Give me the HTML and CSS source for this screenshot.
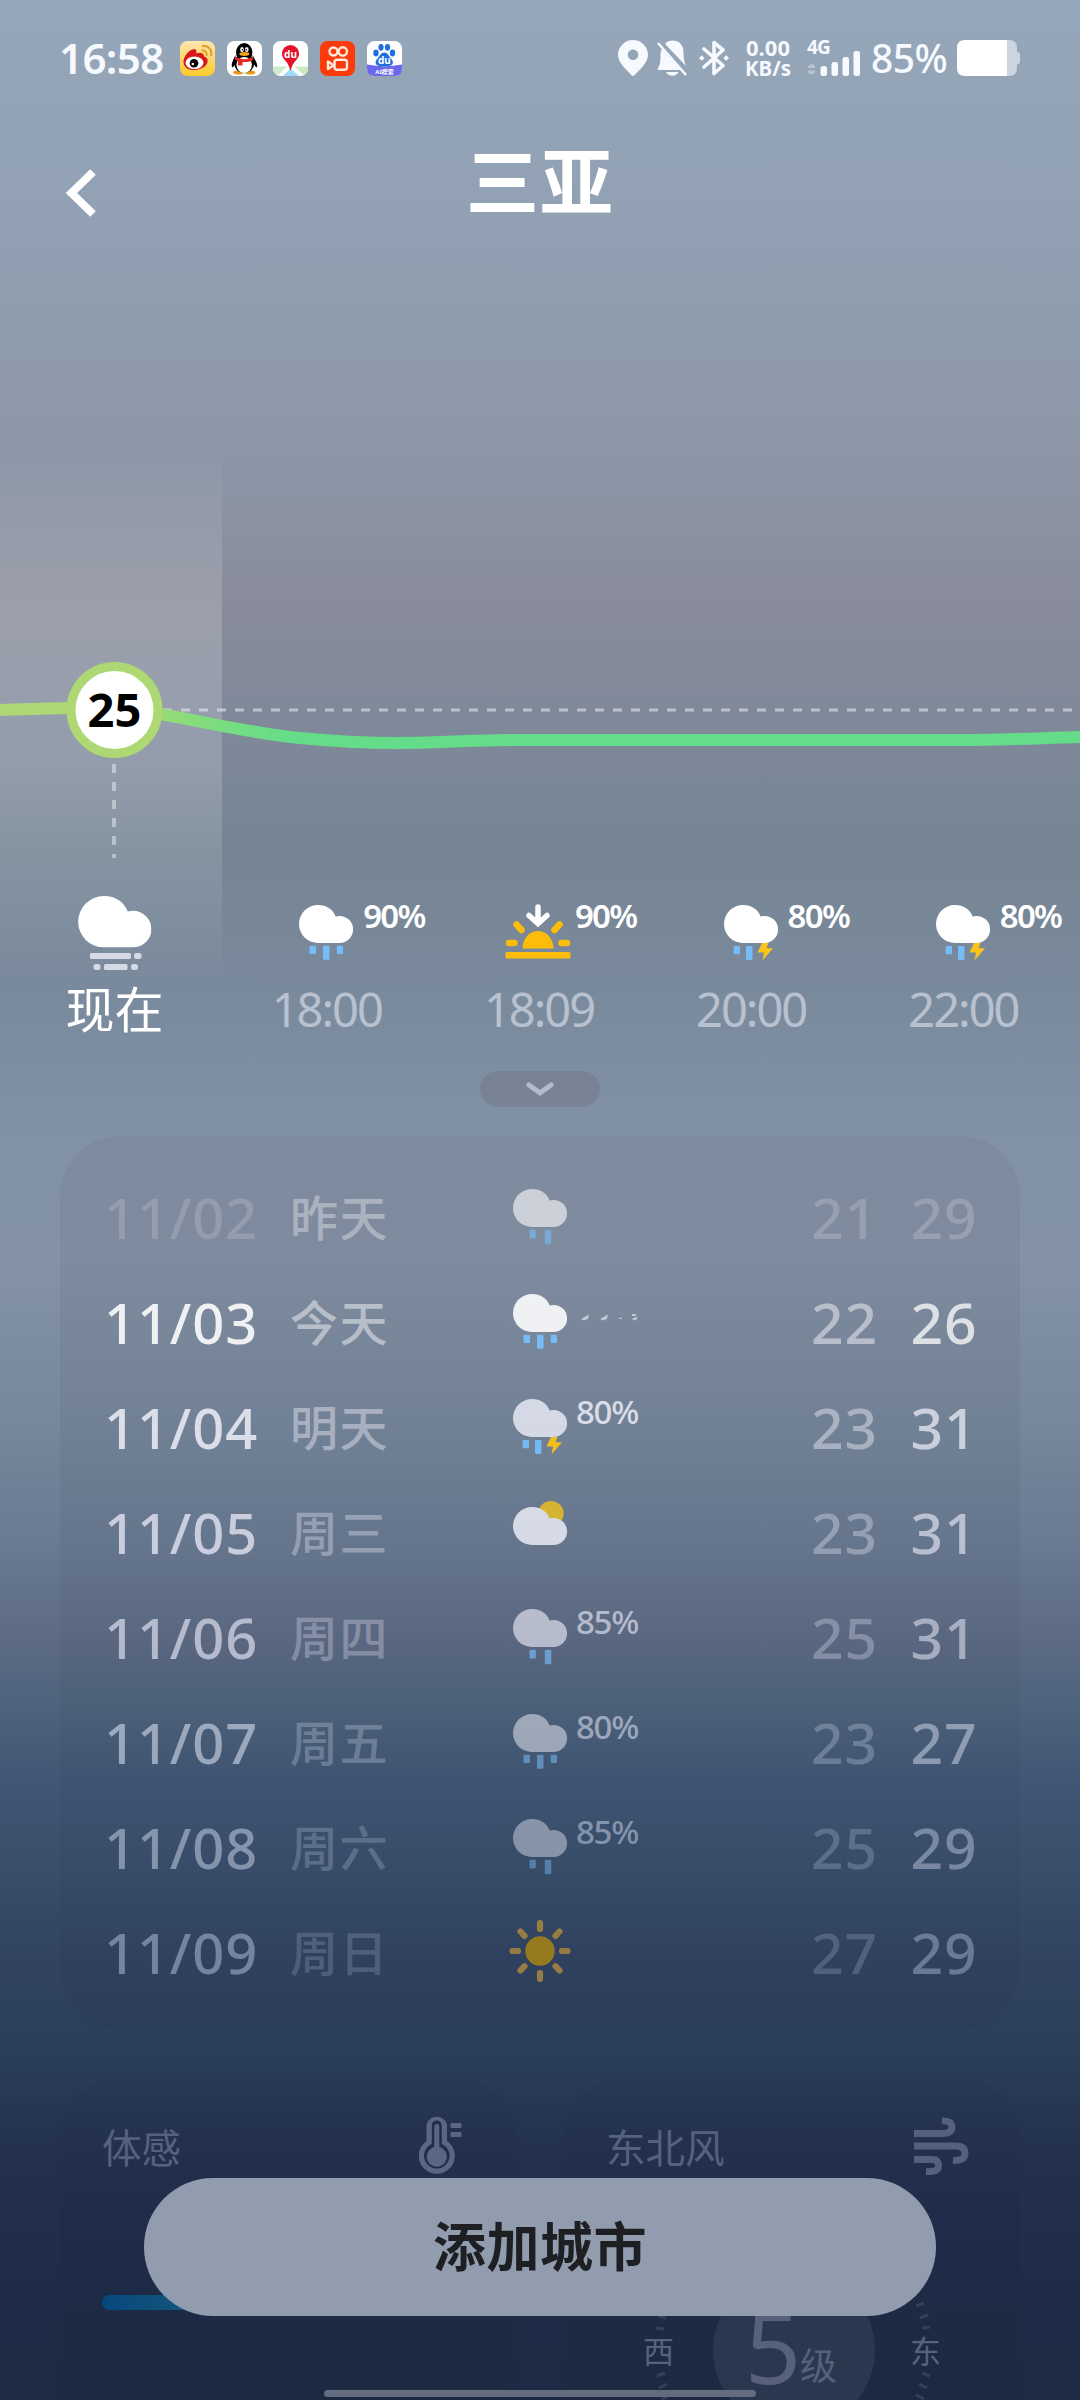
FILE: index.html
```html
<!DOCTYPE html>
<html lang="zh-CN">
<head>
<meta charset="utf-8">
<title>三亚</title>
<link rel="stylesheet" href="styles.css">
</head>
<body>
<svg class="defs" width="0" height="0" aria-hidden="true">
  <symbol id="cloud" viewBox="0 0 54 38"><path d="M19 0C27.500 0 34.200 4.600 36.600 11.500C37.800 11.100 39.200 10.900 40.500 10.900A13.500 13.500 0 0 1 40.500 38H19A19 19 0 0 1 19 0Z" fill="currentColor"/></symbol>
  <symbol id="rain3" viewBox="0 0 54 58"><use href="#cloud" width="54" height="38"/><g fill="#76bdf8"><rect x="10.500" y="40.700" width="6.500" height="8.300" rx="1"/><rect x="24" y="40.700" width="6.500" height="14" rx="1"/><rect x="37.800" y="40.700" width="6.200" height="8.300" rx="1"/></g></symbol>
  <symbol id="rain2" viewBox="0 0 54 58"><use href="#cloud" width="54" height="38"/><g fill="#76bdf8"><rect x="16.500" y="40.700" width="6.300" height="8.800" rx="1"/><rect x="31.800" y="40.700" width="6.500" height="14.500" rx="1"/></g></symbol>
  <symbol id="thunder" viewBox="0 0 54 58" overflow="visible"><use href="#cloud" width="54" height="38"/><g fill="#76bdf8"><rect x="9.700" y="41" width="6.300" height="8.300" rx="1"/><rect x="22" y="41" width="6.500" height="14" rx="1"/></g><path d="M38 38H44.500L42.500 43.300H49L38.500 55.500L40 47.500H33.500Z" fill="#fcc419"/></symbol>
  <symbol id="partly" viewBox="0 0 54 58" overflow="visible"><circle cx="38" cy="9.500" r="12.600" fill="#f5c518"/><use href="#cloud" y="3" width="54" height="38"/></symbol>
  <symbol id="sun" viewBox="0 0 62 62"><circle cx="31" cy="31" r="14.700" fill="#a88414"/><path d="M31 3V9M31 53V59M3.500 31H9M53 31H58.500M11.500 11.500L15.500 15.800M50.500 11.500L46.500 15.800M11.500 50.500L15.500 46.200M50.500 50.500L46.500 46.200" stroke="#a9873f" stroke-width="6.200" stroke-linecap="round"/></symbol>
</svg>

<header class="status">
  <span class="clock">16:58</span>
  <div class="apps">
    <svg viewBox="0 0 35 35"><defs><linearGradient id="wb" x2="0" y2="1"><stop stop-color="#fde6b0"/><stop offset="1" stop-color="#fcc92c"/></linearGradient></defs><rect width="35" height="35" rx="7.500" fill="url(#wb)"/><path d="M3.500 20C4 14 11 7 15 8.300C17 9 16.600 11 16 12.600C19 11 24 11 24 15.500C28.500 16.500 29 21.500 25 25.300C20 29.800 10 30.300 6 26.400C4 24.500 3.300 22.500 3.500 20Z" fill="#d8161b"/><ellipse cx="14.500" cy="21.800" rx="9" ry="6.300" fill="#fff"/><circle cx="14" cy="22.300" r="4.300"/><circle cx="12.800" cy="23" r="1.300" fill="#fff"/><path d="M21.500 9.500C25 8.800 27.500 11.500 26.500 14.800M22 5C28.500 4 32.500 9 31 15" fill="none" stroke="#e0a12c" stroke-width="2.200"/></svg>
    <svg viewBox="0 0 35 35"><rect width="35" height="35" rx="7.500" fill="#fff"/><ellipse cx="11.500" cy="31.500" rx="5.500" ry="2" fill="#e79b18"/><ellipse cx="23" cy="31.500" rx="5.500" ry="2" fill="#e79b18"/><path d="M8.500 14C6 19 4 23 5 26C6 27 7.500 24 8.500 22ZM25.500 14C28 19 31 23 30 26C29 27 27.500 24 26 22Z"/><ellipse cx="17.200" cy="22.500" rx="10" ry="9.600"/><ellipse cx="17.200" cy="11.500" rx="8.200" ry="9.500"/><ellipse cx="17.200" cy="24" rx="7.700" ry="8" fill="#fff"/><ellipse cx="15" cy="8.500" rx="1.800" ry="2.600" fill="#fff"/><ellipse cx="19.800" cy="8.500" rx="1.800" ry="2.600" fill="#fff"/><circle cx="15.500" cy="8.700" r=".8"/><circle cx="19.400" cy="8.700" r=".8"/><ellipse cx="17.400" cy="13" rx="5" ry="1.900" fill="#f5a11c"/><path d="M8.500 15.500C14 19 21 19 26 15.500V19C23 21 19 21.300 15.500 21V24.500H11V20C9.500 19.500 8.500 19 8 18.500Z" fill="#e32b26"/></svg>
    <svg viewBox="0 0 35 35"><rect width="35" height="35" rx="7.500" fill="#fff"/><path d="M0 25.500H14L6 33.500Q0 33 0 27.500Z" fill="#cceccf"/><path d="M21 25.500H35V27.500Q35 32 31 34Z" fill="#cfe9c2"/><path d="M10 35L17.500 27.500L26 35Z" fill="#9bddf6"/><path d="M17.500 4A8.600 8.600 0 0 1 26.100 12.600C26.100 19 19.500 20 18 29H17C15.500 20 8.900 19 8.900 12.600A8.600 8.600 0 0 1 17.500 4Z" fill="#e2142d"/><text x="17.500" y="16.500" text-anchor="middle" class="du">du</text></svg>
    <svg viewBox="0 0 35 35"><rect width="35" height="35" rx="7.500" fill="#fd3a0a"/><g fill="none" stroke="#ffe8dc" stroke-width="2.400"><circle cx="13.500" cy="10.500" r="4"/><circle cx="22.800" cy="10.500" r="4.200"/><rect x="14.500" y="18.800" width="12.500" height="10" rx="2.500"/><path d="M8 20.500V28L13.500 24.300Z" stroke-linejoin="round"/></g></svg>
    <svg viewBox="0 0 35 35"><rect width="35" height="35" rx="7.500" fill="#fff"/><path d="M0 23.500Q17.500 27 35 23.500V27.500Q35 35 27.500 35H7.500Q0 35 0 27.500Z" fill="#6a68ee"/><g fill="#1f6fe0"><ellipse cx="9" cy="12" rx="2.700" ry="3.400"/><ellipse cx="14" cy="6.300" rx="2.600" ry="3.400"/><ellipse cx="20.500" cy="6.300" rx="2.600" ry="3.400"/><ellipse cx="25.500" cy="12" rx="2.700" ry="3.400"/><path d="M17.300 11.500C21 11.500 21.500 15 24 17.500C28 22 25 25 21.500 25H13C9.500 25 6.500 22 10.500 17.500C13 15 13.600 11.500 17.300 11.500Z"/></g><text x="17.300" y="22.800" text-anchor="middle" class="du">du</text><text x="17.500" y="32.800" text-anchor="middle" class="ai">AI搜索</text></svg>
  </div>
  <div class="sys">
    <svg class="pin" viewBox="0 0 30 36"><path fill-rule="evenodd" d="M15 0A15 15 0 0 1 30 15C30 23 21 30 16.500 35.300Q15 36.500 13.500 35.300C9 30 0 23 0 15A15 15 0 0 1 15 0ZM15 9.500A5.300 5.300 0 1 0 15 20.100A5.300 5.300 0 1 0 15 9.500Z" fill="currentColor"/></svg>
    <svg class="bell" viewBox="0 0 31 36"><path d="M8.500 3C15-2 26.500.5 26.500 12C26.500 19 27.500 23 29.500 26.500L8.500 4.500ZM4.800 9L24 30H1.500Q0 29.500 1 28C3.500 24.500 3.500 20 3.500 14Q3.500 11 4.800 9ZM9 32H21.500C19.500 37 11.500 37 9 32Z" fill="currentColor"/><path d="M1 3L29 35" stroke="currentColor" stroke-width="2.600"/></svg>
    <svg class="bt" viewBox="0 0 30 36"><path d="M5 9L24 25.500L15 33.500V2.500L24 10L5 27" fill="none" stroke="currentColor" stroke-width="3.600" stroke-linejoin="round" stroke-linecap="round"/><path d="M2.800 15.300L5.500 18L2.800 20.700L0 18ZM27.200 15.300L30 18L27.200 20.700L24.500 18Z" fill="currentColor"/></svg>
    <div class="rate"><span>0.00</span><span>KB/s</span></div>
    <div class="signal"><span>4G</span>
      <svg viewBox="0 0 54 25"><path d="M.5 17A4.200 5.500 0 0 1 8.500 17ZM.5 19.500A4.200 5.500 0 0 0 8.500 19.500Z" fill="#fff" opacity=".35"/><g fill="currentColor"><rect x="13.500" y="15" width="6.500" height="10" rx="2.500"/><rect x="24.500" y="11" width="6.500" height="14" rx="2.500"/><rect x="35.500" y="6" width="6.500" height="19" rx="2.500"/><rect x="46.500" y="0" width="6.500" height="25" rx="2.500"/></g></svg>
    </div>
    <span class="level">85%</span>
    <svg class="battery" viewBox="0 0 63 36"><path d="M50 0H52Q60 0 60 8V12Q63 12 63 14V22Q63 24 60 24V28Q60 36 52 36H50Z" fill="#cbd4df"/><path d="M8 0H50V36H8Q0 36 0 28V8Q0 0 8 0Z" fill="#fff"/></svg>
  </div>
</header>

<div class="titlebar">
  <svg class="back" viewBox="0 0 30 48"><path d="M27 3L5.500 24L27 45" fill="none" stroke="#fff" stroke-width="8"/></svg>
  <h1>三亚</h1>
</div>

<section class="hourly">
  <div class="now-column"></div>
  <svg class="chart" viewBox="0 0 1080 440">
    <defs><linearGradient id="line" gradientUnits="userSpaceOnUse" x1="114" y1="0" x2="300" y2="0"><stop stop-color="#add873"/><stop offset=".25" stop-color="#97db78"/><stop offset=".65" stop-color="#74dd82"/><stop offset="1" stop-color="#64dc8a"/></linearGradient></defs>
    <path d="M163 270H1080" stroke="#fff" stroke-opacity=".48" stroke-width="3" stroke-dasharray="9 9"/>
    <path d="M114 324V418" stroke="#fff" stroke-opacity=".42" stroke-width="4" stroke-dasharray="9 9"/>
    <path d="M0 270C40 269 80 267 114 268C170 272 230 291 300 298C350 303 400 304 440 302C500 299 520 300 560 300H960C1010 300 1040 298 1080 297" fill="none" stroke="url(#line)" stroke-width="12"/>
    <circle cx="114.500" cy="270" r="43.500" fill="#fff" stroke="#add873" stroke-width="9"/>
    <text x="114.500" y="287" text-anchor="middle" class="now-temp">25</text>
  </svg>
  <div class="hours">
    <div class="hour now"><div class="hour-icon"><svg viewBox="0 0 74 76"><use href="#cloud" width="73.500" height="51.500"/><g fill="#d5dae5"><rect x="12" y="57" width="41" height="6" rx="1.500"/><rect x="56" y="57" width="7.500" height="6" rx="2.500"/><rect x="15.500" y="68" width="7" height="6" rx="2.500"/><rect x="26" y="68" width="23.500" height="6" rx="1.500"/><rect x="53" y="68" width="7" height="6" rx="2.500"/></g></svg></div><span>现在</span></div>
    <div class="hour"><div class="hour-icon"><svg viewBox="0 0 54 58"><use href="#rain3"/></svg><b>90%</b></div><span>18:00</span></div>
    <div class="hour sunset"><div class="hour-icon"><svg viewBox="0 0 66 58"><g stroke="#fbbd09" stroke-linecap="round" stroke-width="6.500"><path d="M4 39H9.500M56.500 39H62M11.500 20.500L16.500 26M54.500 20.500L49.500 26"/></g><path d="M17.500 44.500A15.500 17.500 0 0 1 48.500 44.500Z" fill="#fbbd09"/><rect x=".5" y="48" width="65" height="6.500" rx="1.500" fill="#fbbd09"/><path d="M33 3V18M24 11.500L33 19.500L42 11.500" fill="none" stroke="#fff" stroke-width="5.500" stroke-linecap="round"/></svg><b>90%</b></div><span>18:09</span></div>
    <div class="hour"><div class="hour-icon"><svg viewBox="0 0 54 58"><use href="#thunder"/></svg><b>80%</b></div><span>20:00</span></div>
    <div class="hour"><div class="hour-icon"><svg viewBox="0 0 54 58"><use href="#thunder"/></svg><b>80%</b></div><span>22:00</span></div>
  </div>
</section>

<button class="expand" aria-label="展开"><svg viewBox="0 0 28 15"><path d="M3 3L14 11L25 3" fill="none" stroke="#b1bbc9" stroke-width="5" stroke-linecap="round"/></svg></button>

<section class="daily">
  <div class="day d1"><span class="date">11/02</span><span class="wd">昨天</span><svg><use href="#rain2"/></svg><i></i><span class="lo">21</span><span class="hi">29</span></div>
  <div class="day d2"><span class="date">11/03</span><span class="wd">今天</span><svg><use href="#rain3"/></svg><svg class="rolling" viewBox="0 0 62 10"><path d="M3 7L11 2.500L10 7L6 8.500ZM22 7L30 2.500L29 7L25 8.500ZM40 7L43.500 5V7ZM54 2H58V4H54ZM53 7L60 4.500L58 8.500Z" fill="#c3c8d3"/></svg><span class="lo">22</span><span class="hi">26</span></div>
  <div class="day d3"><span class="date">11/04</span><span class="wd">明天</span><svg><use href="#thunder"/></svg><i>80%</i><span class="lo">23</span><span class="hi">31</span></div>
  <div class="day d4"><span class="date">11/05</span><span class="wd">周三</span><svg><use href="#partly"/></svg><i></i><span class="lo">23</span><span class="hi">31</span></div>
  <div class="day d5"><span class="date">11/06</span><span class="wd">周四</span><svg><use href="#rain2"/></svg><i>85%</i><span class="lo">25</span><span class="hi">31</span></div>
  <div class="day d6"><span class="date">11/07</span><span class="wd">周五</span><svg><use href="#rain3"/></svg><i>80%</i><span class="lo">23</span><span class="hi">27</span></div>
  <div class="day d7"><span class="date">11/08</span><span class="wd">周六</span><svg><use href="#rain2"/></svg><i>85%</i><span class="lo">25</span><span class="hi">29</span></div>
  <div class="day d8"><span class="date">11/09</span><span class="wd">周日</span><svg class="sun"><use href="#sun"/></svg><i></i><span class="lo">27</span><span class="hi">29</span></div>
</section>

<section class="tiles">
  <div class="tile feels">
    <div class="tile-head"><span>体感</span><svg width="43" height="62" viewBox="0 0 43 62"><path d="M7.500 27V11A10.500 10.500 0 0 1 28 11V27A18 18 0 1 1 7.500 27Z" fill="#5b6782"/><path d="M12.800 30V11.500A5 5 0 0 1 22.800 11.500V30A12.800 12.800 0 1 1 12.800 30Z" fill="#202e4b"/><path d="M15.300 33V12.500A2.500 2.500 0 0 1 20.300 12.500V33A10 10 0 1 1 15.300 33Z" fill="#5b6782"/><rect x="31.500" y="9" width="11" height="5" rx="1" fill="#5b6782"/><rect x="31.500" y="18" width="11" height="5" rx="1" fill="#5b6782"/></svg></div>
    <div class="scale"></div>
  </div>
  <div class="tile wind">
    <div class="tile-head"><span>东北风</span><svg width="56" height="58" viewBox="0 0 56 58"><path d="M0 16.500H28Q38 16.500 38 10T28 4M0 29H42Q51 29 51 36.500T39 43.500M0 42.500H18Q24.500 42.500 24.500 49T12 54.500" fill="none" stroke="#55617c" stroke-width="6.800"/></svg></div>
    <svg class="compass" width="300" height="108" viewBox="642 2292 300 108">
      <circle cx="794" cy="2350" r="81" fill="#29374f"/>
      <g stroke="#33405a" stroke-width="3"><path d="M658 2316L666 2318M656 2328L664 2329M657 2376L665 2373M659 2388L667 2384M662 2399L670 2395M916 2306L924 2303M920 2318L928 2315M922 2328L930 2327M922 2373L930 2376M919 2384L927 2388M916 2395L924 2399"/></g>
      <text x="773" y="2384" text-anchor="middle" class="force">5</text>
      <text x="818.500" y="2380" text-anchor="middle" class="unit">级</text>
      <text x="658.500" y="2363" text-anchor="middle" class="dir">西</text>
      <text x="925.500" y="2363" text-anchor="middle" class="dir">东</text>
    </svg>
  </div>
</section>

<button class="add">添加城市</button>
<div class="homebar"></div>
</body>
</html>
```
FILE: styles.css
```css
* { box-sizing: border-box; }

html, body { margin: 0; height: 2400px; overflow: hidden; }

body {
  position: relative;
  width: 1080px;
  display: flex;
  flex-direction: column;
  font-family: "Noto Sans", "Noto Sans CJK SC", sans-serif;
  color: #fff;
  background: linear-gradient(180deg,
    #95a7ba 0, #92a1b4 200px, #8e9aac 380px, #8b93a3 510px, #898c9a 600px,
    #80899a 710px, #758593 850px, #7a8a9d 990px, #8192a6 1130px, #8493a7 1260px,
    #77889c 1420px, #687991 1550px, #5d6a84 1640px, #4f647d 1700px, #405674 1780px,
    #374d69 1880px, #314361 1960px, #2b3f58 2050px, #23314f 2150px, #1f2c4a 2260px, #1c2a43 2400px);
}

button { font: inherit; border: 0; padding: 0; }
svg { display: block; flex: none; }
.defs { position: absolute; }

/* status bar */
.status { height: 116px; padding: 0 60px 0 59px; display: flex; align-items: center; color: #f6f9fd; }
.clock { font-size: 42px; font-weight: 600; width: 121px; line-height: 1; letter-spacing: -.6px; }
.apps { display: flex; gap: 11.700px; }
.apps svg { width: 35px; height: 35px; }
.du { font: 700 10px "Noto Sans", sans-serif; fill: #fff; }
.ai { font: 700 6px "Noto Sans", "Noto Sans CJK SC", sans-serif; fill: #fff; }
.sys { margin-left: auto; display: flex; align-items: center; }
.pin { width: 30px; height: 36px; }
.bell { width: 31px; height: 36px; margin-left: 9px; }
.bt { width: 30px; height: 36px; margin-left: 11px; }
.rate { display: flex; flex-direction: column; align-items: center; width: 48px; margin-left: 15px; font-size: 22px; font-weight: 700; line-height: 21px; white-space: nowrap; }
.rate span + span { font-size: 20.500px; }
.signal { width: 56px; height: 38px; margin-left: 15px; display: flex; flex-direction: column; }
.signal span { font-size: 19px; font-weight: 700; line-height: 17px; height: 12px; letter-spacing: -.8px; }
.signal svg { width: 54px; height: 25px; }
.level { font-size: 39px; font-weight: 500; line-height: 1; width: 86px; margin-left: 8px; margin-top: -1px; letter-spacing: -.5px; }
.battery { width: 63px; height: 36px; }

.titlebar { height: 324px; padding: 27px 66px 0; display: grid; grid-template-columns: 30px 1fr 30px; align-items: start; }
.back { width: 30px; height: 48px; margin-top: 26px; }
h1 { margin: -1px 0 0; text-align: center; font-size: 73px; line-height: 78px; font-weight: 700; letter-spacing: 1px; }

/* hourly forecast */
.hourly { position: relative; height: 631px; }
.now-column { position: absolute; left: 0; top: 0; width: 222px; height: 540px; background: linear-gradient(180deg, rgba(240,244,255,0), rgba(250,250,255,.18) 32%, rgba(246,248,255,.19) 60%, rgba(236,242,255,.11) 82%, rgba(230,240,255,0)); }
.chart { position: relative; width: 1080px; height: 440px; }
.now-temp { font: 700 47px "Noto Sans", sans-serif; fill: #000; }
.hours { position: relative; display: grid; grid-template-columns: repeat(5, 212.200px); padding-left: 8.500px; margin-top: 14px; }
.hour { display: flex; flex-direction: column; }
.hour-icon { display: flex; gap: 10px; height: 76px; padding: 11px 0 0 78.500px; }
.hour-icon svg { width: 54px; height: 58px; overflow: visible; }
.hour-icon b { font-size: 33px; font-weight: 600; line-height: 22px; letter-spacing: -1.700px; }
.hour > span { height: 78px; line-height: 78px; font-size: 47px; color: #b8c1cf; text-align: center; letter-spacing: -2px; }
.now .hour-icon { padding: 2px 0 0 69px; }
.now .hour-icon svg { width: 74px; height: 76px; }
.now > span { font-size: 49px; color: #fff; letter-spacing: 0; line-height: 79px; }
.sunset .hour-icon { padding-left: 72px; gap: 4px; padding-top: 10px; }
.sunset .hour-icon svg { width: 66px; }
.sunset .hour-icon b { margin-top: 1px; }

.expand { align-self: center; display: grid; place-items: center; width: 120px; height: 36px; border-radius: 18px; background: rgba(115,122,140,.6); }
.expand svg { width: 28px; height: 15px; }

/* daily forecast */
.daily { flex: none; margin: 29px 60px 0; height: 894px; padding: 30px 0 0 44px; border-radius: 60px; background: linear-gradient(180deg, rgba(120,118,136,.28), rgba(92,106,126,.22) 35%, rgba(60,72,94,.12) 60%, rgba(40,52,78,.07) 80%, rgba(32,44,70,.12)); }
.day { display: grid; grid-template-columns: 186px 223px 63px 235px 99.500px 90px; height: 105px; align-items: center; font-weight: 500; line-height: 105px; }
.date { font-size: 56px; letter-spacing: .900px; margin-top: -2px; }
.wd { font-size: 48px; letter-spacing: 1.500px; opacity: .48; margin-top: -2px; }
.day svg { width: 54px; height: 58px; margin-top: -1px; overflow: visible; }
.day i { font-style: normal; font-size: 33px; font-weight: 500; line-height: 36px; margin-bottom: 33px; letter-spacing: -1.300px; }
.day .rolling { width: 62px; height: 10px; margin: 0 0 13px 2px; }
.day .sun { width: 62px; height: 62px; margin-left: -4px; margin-top: -5px; }
.lo, .hi { font-size: 57px; letter-spacing: .900px; margin-top: -2px; }
.lo { opacity: .48; }
.hi { opacity: .85; }
.d1 .date { opacity: .16; }
.d1 .wd { opacity: .34; }
.d1 svg { opacity: .6; }
.d1 .lo, .d1 .hi { opacity: .19; }
.d2 { color: rgba(255,255,255,.88); }
.d3 { color: rgba(246,246,255,.8); }
.d4 { color: rgba(240,240,252,.72); }
.d5 { color: rgba(235,236,250,.63); }
.d6 { color: rgba(230,234,250,.54); }
.d7 { color: rgba(220,226,242,.48); }
.d8 { color: rgba(210,220,240,.43); }
.d2 .wd, .d2 .lo, .d3 .wd, .d3 .lo { opacity: .53; }
.d3 svg { opacity: .94; }
.d5 svg, .d6 svg, .d7 svg { color: #e6e8f2; }
.d4 svg { opacity: .78; color: #f6f7ff; }
.d5 svg { opacity: .66; }
.d6 svg { opacity: .54; }
.d7 svg { opacity: .45; }
.d8 svg { opacity: .85; }

/* detail tiles */
.tiles { flex: none; display: grid; grid-template-columns: 1fr 1fr; gap: 48px; margin: 48px 60px 0; }
.tile { height: 322px; border-radius: 60px 60px 0 0; background: linear-gradient(180deg, rgba(32,40,72,.1), rgba(26,38,60,.3)); }
.tile-head { display: flex; justify-content: space-between; height: 100px; padding: 36px 54px 0 42px; color: #55617d; font-size: 39.500px; line-height: 68px; }
.wind .tile-head { padding-right: 50px; }
.wind .tile-head svg { margin-top: 3px; }
.scale { width: 376px; height: 15px; margin: 117px 0 0 42px; border-radius: 8px; background: linear-gradient(90deg, #06477f, #12557a 20%, #2b6b60); }
.compass { margin: 114px 0 0 78px; }
.force { font: 400 98px "Noto Sans", sans-serif; fill: #57627a; }
.unit { font: 400 37px "Noto Sans CJK SC", sans-serif; fill: #55617a; }
.dir { font: 400 31px "Noto Sans CJK SC", sans-serif; fill: #57637d; }

.add { position: absolute; left: 144px; top: 2178px; width: 792px; height: 138px; border-radius: 69px; background: #919daf; color: #1d1f23; font-size: 53px; font-weight: 700; line-height: 132px; text-align: center; letter-spacing: .5px; }
.homebar { position: absolute; left: 324px; top: 2390px; width: 432px; height: 7px; border-radius: 4px; background: #646d80; }
```
